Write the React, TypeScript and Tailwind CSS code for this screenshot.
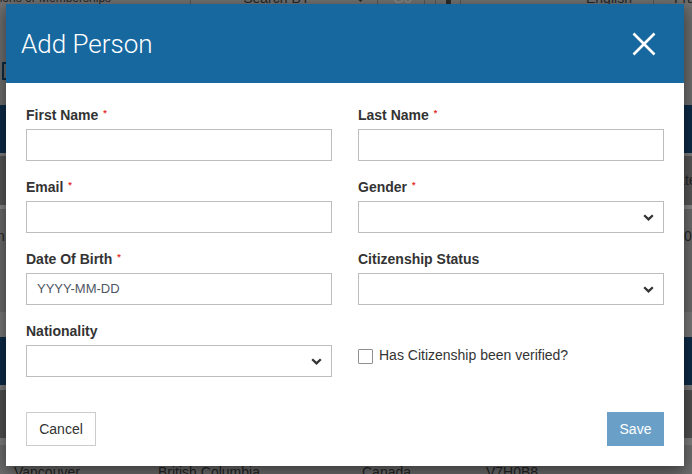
import React from "react";

const sans = "font-['Liberation_Sans',Arial,Helvetica,sans-serif]";

function Chevron({ color = "#333" }: { color?: string }) {
  return (
    <svg width="11" height="7" viewBox="0 0 11 7" aria-hidden="true">
      <path d="M1.2 1.2 5.5 5.4 9.8 1.2" fill="none" stroke={color} strokeWidth="2.3" />
    </svg>
  );
}

function CloseIcon() {
  return (
    <svg width="24" height="24" viewBox="0 0 24 24" aria-hidden="true">
      <path d="M1.5 1.5 22.5 22.5 M22.5 1.5 1.5 22.5" fill="none" stroke="#ffffff" strokeWidth="2.6" />
    </svg>
  );
}

function FieldLabel({ text, required }: { text: string; required?: boolean }) {
  return (
    <div className="mb-1 flex h-5 items-start text-[14px] font-bold leading-5 text-[#333]">
      <span>{text}</span>
      {required && <span className="ml-[5px] mt-[4px] text-[9px] leading-none text-[#e5322d]">*</span>}
    </div>
  );
}

function TextBox({ placeholder }: { placeholder?: string }) {
  return (
    <div className="flex h-8 items-center border border-[#bdbdbd] bg-white px-[10px] text-[13px] text-[#4f5865]">
      {placeholder}
    </div>
  );
}

function SelectBox() {
  return (
    <div className="flex h-8 items-center justify-end border border-[#bdbdbd] bg-white pr-[9px]">
      <Chevron />
    </div>
  );
}

function Sep() {
  return <div className="w-px shrink-0 self-stretch bg-[#555]" />;
}

function Backdrop() {
  return (
    <div className="flex h-[474px] w-[692px] flex-col overflow-hidden bg-[#6d6d6d] text-[14px] text-[#242424]">
      {/* top navigation bar, scrolled mostly out of view */}
      <div className="-mt-[21px] flex h-[29px] shrink-0 items-end whitespace-nowrap bg-[#707070] leading-4">
        <div className="w-[190px] shrink-0 overflow-hidden pb-[2px] text-[12px]">
          <span className="-ml-[27px] inline-block">Positions or Memberships</span>
        </div>
        <Sep />
        <div className="flex w-[186px] shrink-0 items-center pb-[2px] pl-[39px]">
          <span>-- Search BY --</span>
          <span className="ml-[32px]">
            <Chevron color="#2a2a2a" />
          </span>
        </div>
        <Sep />
        <div className="w-[46px] shrink-0 pb-[2px] pl-[15px] text-[#8a8a8a]">Go</div>
        <Sep />
        <div className="w-[10px] shrink-0" />
        <Sep />
        <div className="flex w-[24px] shrink-0 justify-center pb-[2px]">
          <div className="h-[10px] w-[5px] rounded-b-[2px] bg-[#2a2a2a]" />
        </div>
        <Sep />
        <div className="w-[192px] shrink-0 pb-[2px] pl-[125px]">English</div>
        <Sep />
        <div className="pb-[2px] pl-[20px]">Français</div>
      </div>

      <div className="h-[97px] shrink-0 pt-[54px]">
        <div className="ml-[2px] h-[18px] w-[24px] border-2 border-[#0e2a42]" />
      </div>
      <div className="h-[48px] shrink-0 bg-[#0c2b46]" />
      <div className="h-[3px] shrink-0 bg-[#7c7c7c]" />
      <div className="flex h-[49px] shrink-0 items-center whitespace-nowrap bg-[#565656] pl-[667px]">Date</div>
      <div className="h-[4px] shrink-0 bg-[#878787]" />
      <div className="flex h-[103px] shrink-0 items-start justify-between whitespace-nowrap bg-[#6a6a6a] pt-[17px] leading-5">
        <span className="-ml-[3px]">n</span>
        <span className="w-[8px] overflow-hidden">0:30</span>
      </div>
      <div className="h-[25px] shrink-0 bg-[#777777]" />
      <div className="h-[48px] shrink-0 bg-[#0c2b46]" />
      <div className="h-[5px] shrink-0 bg-[#7a7a7a]" />
      <div className="h-[48px] shrink-0 bg-[#4f4f4f]" />
      <div className="h-[7px] shrink-0 bg-[#7d7d7d]" />
      <div className="flex flex-1 whitespace-nowrap pt-[17px] leading-5">
        <div className="w-[158px] shrink-0 pl-[14px]">Vancouver</div>
        <div className="w-[204px] shrink-0">British Columbia</div>
        <div className="w-[124px] shrink-0">Canada</div>
        <div>V7H0B8</div>
      </div>
    </div>
  );
}

export default function App() {
  return (
    <div className={`relative h-[474px] w-[692px] overflow-hidden ${sans}`}>
      <Backdrop />

      <div className="absolute left-[6px] top-[4px] w-[678px] bg-white shadow-[0_5px_15px_rgba(0,0,0,0.5)]">
        <div className="flex h-[79px] items-center justify-between bg-[#1868a0] pl-[15px] pr-[28px]">
          <h1 className="font-['Roboto',sans-serif] text-[26px] font-light leading-none text-white">Add Person</h1>
          <CloseIcon />
        </div>

        <div className="px-[20px] pb-[20px] pt-[22px]">
          <div className="grid grid-cols-2 gap-x-[26px] gap-y-4">
            <div>
              <FieldLabel text="First Name" required />
              <TextBox />
            </div>
            <div>
              <FieldLabel text="Last Name" required />
              <TextBox />
            </div>
            <div>
              <FieldLabel text="Email" required />
              <TextBox />
            </div>
            <div>
              <FieldLabel text="Gender" required />
              <SelectBox />
            </div>
            <div>
              <FieldLabel text="Date Of Birth" required />
              <TextBox placeholder="YYYY-MM-DD" />
            </div>
            <div>
              <FieldLabel text="Citizenship Status" />
              <SelectBox />
            </div>
            <div>
              <FieldLabel text="Nationality" />
              <SelectBox />
            </div>
            <div className="pt-6">
              <div className="flex items-start">
                <div className="mt-[4px] h-[15px] w-[15px] shrink-0 rounded-[1px] border border-[#8f8f8f] bg-white" />
                <span className="ml-[6px] text-[14px] leading-5 text-[#333]">Has Citizenship been verified?</span>
              </div>
            </div>
          </div>

          <div className="mt-[35px] flex items-center justify-between">
            <button className="h-[34px] w-[70px] border border-[#cccccc] bg-white text-[14px] text-[#333]">Cancel</button>
            <button className="h-[34px] w-[57px] bg-[#6aa0c8] text-[14px] text-white">Save</button>
          </div>
        </div>
      </div>
    </div>
  );
}
